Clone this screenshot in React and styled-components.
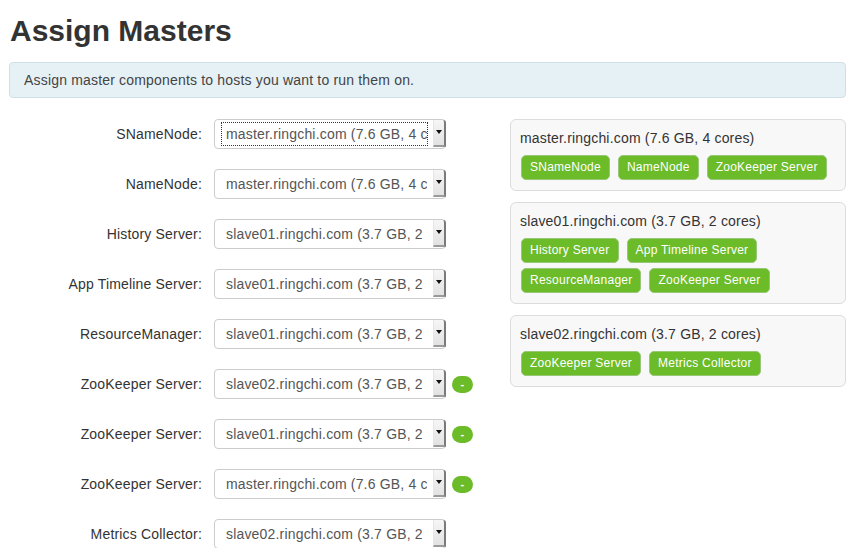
import React from "react";
import styled, { createGlobalStyle } from "styled-components";

const GlobalStyle = createGlobalStyle`
  html, body {
    margin: 0;
    padding: 0;
    overflow: hidden;
    background: #fff;
  }
  body {
    font-family: "Liberation Sans", Arial, sans-serif;
    font-size: 14px;
    letter-spacing: 0.18px;
    color: #333;
  }
`;

const Page = styled.div`
  width: 837px;
  padding: 0 0 0 9px;
`;

const Title = styled.h2`
  margin: 11px 0 11px 1px;
  font-size: 30px;
  line-height: 40px;
  font-weight: bold;
  letter-spacing: 0;
  color: #333;
`;

const Alert = styled.div`
  padding: 7px 14px;
  line-height: 20px;
  background: #e6f1f6;
  border: 1px solid #cfdfe7;
  border-radius: 4px;
  color: #444;
  margin-bottom: 21px;
`;

const Columns = styled.div`
  display: grid;
  grid-template-columns: 501px 1fr;
  align-items: start;
`;

const Form = styled.div`
  display: flex;
  flex-direction: column;
  gap: 20px;
`;

const Row = styled.div`
  display: flex;
  align-items: center;
  height: 30px;
`;

const Label = styled.label`
  width: 193px;
  margin-right: 12px;
  text-align: right;
  color: #333;
`;

const Select = styled.div`
  box-sizing: border-box;
  width: 232px;
  height: 30px;
  display: flex;
  align-items: center;
  background: #fff;
  border: 1px solid #ccc;
  border-radius: 4px;
  color: #555;
`;

const SelectText = styled.span`
  flex: 1;
  height: 24px;
  line-height: 23px;
  box-sizing: border-box;
  margin: 0 5px 0 6px;
  padding: 0 0 0 4px;
  border: 1px dotted ${(p) => (p.$focused ? "#333" : "transparent")};
  white-space: nowrap;
  overflow: hidden;
`;

const ArrowButton = styled.span`
  box-sizing: border-box;
  width: 13px;
  height: 27px;
  margin-right: -1px;
  align-self: flex-start;
  display: flex;
  align-items: center;
  justify-content: center;
  background: linear-gradient(#f6f6f6, #e2e2e2);
  border-left: 1px solid #e6e6e6;
  border-right: 2px solid #7a7a7a;
  border-bottom: 2px solid #9a9a9a;
  border-top-right-radius: 3px;

  &::after {
    content: "";
    display: block;
    margin-top: -2px;
    border-left: 3px solid transparent;
    border-right: 3px solid transparent;
    border-top: 4px solid #111;
  }
`;

const RemoveButton = styled.span`
  width: 21px;
  height: 17px;
  margin-left: 6px;
  border-radius: 9px;
  background: #6cbb29;
  color: #fff;
  font-size: 11px;
  font-weight: bold;
  line-height: 16px;
  text-align: center;
`;

const Hosts = styled.div`
  display: flex;
  flex-direction: column;
  gap: 11px;
`;

const HostBox = styled.div`
  padding: 8px 10px 10px;
  background: #f8f8f8;
  border: 1px solid #dcdcdc;
  border-radius: 6px;
`;

const HostName = styled.div`
  line-height: 20px;
  margin: 0 0 7px -1px;
  color: #333;
`;

const Badges = styled.div`
  display: flex;
  flex-wrap: wrap;
  gap: 5px 8px;
`;

const Badge = styled.span`
  height: 25px;
  box-sizing: border-box;
  padding: 0 8px;
  line-height: 23px;
  font-size: 12px;
  letter-spacing: 0.25px;
  color: #fff;
  background: #6cbb29;
  border: 1px solid #98c779;
  border-radius: 5px;
`;

const MASTER = "master.ringchi.com (7.6 GB, 4 cores)";
const SLAVE1 = "slave01.ringchi.com (3.7 GB, 2 cores)";
const SLAVE2 = "slave02.ringchi.com (3.7 GB, 2 cores)";

const assignments = [
  { name: "SNameNode", host: MASTER, focused: true },
  { name: "NameNode", host: MASTER },
  { name: "History Server", host: SLAVE1 },
  { name: "App Timeline Server", host: SLAVE1 },
  { name: "ResourceManager", host: SLAVE1 },
  { name: "ZooKeeper Server", host: SLAVE2, removable: true },
  { name: "ZooKeeper Server", host: SLAVE1, removable: true },
  { name: "ZooKeeper Server", host: MASTER, removable: true },
  { name: "Metrics Collector", host: SLAVE2 },
];

const hosts = [
  { host: MASTER, components: ["SNameNode", "NameNode", "ZooKeeper Server"] },
  {
    host: SLAVE1,
    components: ["History Server", "App Timeline Server", "ResourceManager", "ZooKeeper Server"],
  },
  { host: SLAVE2, components: ["ZooKeeper Server", "Metrics Collector"] },
];

export default function App() {
  return (
    <Page>
      <GlobalStyle />
      <Title>Assign Masters</Title>
      <Alert>Assign master components to hosts you want to run them on.</Alert>
      <Columns>
        <Form>
          {assignments.map((item, i) => (
            <Row key={i}>
              <Label>{item.name}:</Label>
              <Select>
                <SelectText $focused={item.focused}>{item.host}</SelectText>
                <ArrowButton />
              </Select>
              {item.removable && <RemoveButton>-</RemoveButton>}
            </Row>
          ))}
        </Form>
        <Hosts>
          {hosts.map((h) => (
            <HostBox key={h.host}>
              <HostName>{h.host}</HostName>
              <Badges>
                {h.components.map((c) => (
                  <Badge key={c}>{c}</Badge>
                ))}
              </Badges>
            </HostBox>
          ))}
        </Hosts>
      </Columns>
    </Page>
  );
}
